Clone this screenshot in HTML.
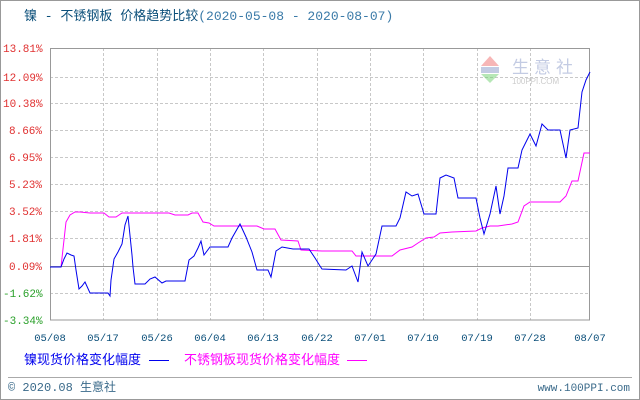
<!DOCTYPE html>
<html><head><meta charset="utf-8"><style>
body{margin:0;width:640px;height:400px;background:#fff;overflow:hidden;font-family:"Liberation Mono","Noto Sans CJK SC",monospace;}
</style></head><body>
<svg width="640" height="400" xmlns="http://www.w3.org/2000/svg" style="position:absolute;left:0;top:0">
<rect x="0.5" y="0.5" width="639" height="399" fill="#fff" stroke="#999"/>
<text x="24" y="20" font-size="13" fill="#0b4f7a" font-family="Liberation Mono,Noto Sans CJK SC,monospace">镍 - 不锈钢板 价格趋势比较<tspan fill="#3a7aa8">(2020-05-08 - 2020-08-07)</tspan></text>
<g stroke="#c8c8c8" stroke-dasharray="3,2" stroke-width="1">
<line x1="50" y1="77.5" x2="590" y2="77.5"/><line x1="50" y1="103.5" x2="590" y2="103.5"/><line x1="50" y1="130.5" x2="590" y2="130.5"/><line x1="50" y1="157.5" x2="590" y2="157.5"/><line x1="50" y1="184.5" x2="590" y2="184.5"/><line x1="50" y1="211.5" x2="590" y2="211.5"/><line x1="50" y1="238.5" x2="590" y2="238.5"/><line x1="50" y1="293.5" x2="590" y2="293.5"/>
<line x1="103.5" y1="48" x2="103.5" y2="320"/><line x1="157.5" y1="48" x2="157.5" y2="320"/><line x1="210.5" y1="48" x2="210.5" y2="320"/><line x1="263.5" y1="48" x2="263.5" y2="320"/><line x1="317.5" y1="48" x2="317.5" y2="320"/><line x1="370.5" y1="48" x2="370.5" y2="320"/><line x1="423.5" y1="48" x2="423.5" y2="320"/><line x1="477.5" y1="48" x2="477.5" y2="320"/><line x1="530.5" y1="48" x2="530.5" y2="320"/>
</g>
<line x1="50" y1="266.5" x2="590" y2="266.5" stroke="#999"/>
<rect x="50.5" y="48.5" width="539" height="271.5" fill="none" stroke="#999"/>
<g font-size="11" font-family="Liberation Mono,monospace">
<text x="3" y="52" fill="#e03030">13.81%</text>
<g fill="#e03030"><text x="3" y="81">12.09%</text><text x="3" y="107">10.38%</text><text x="9" y="134">8.66%</text><text x="9" y="161">6.95%</text><text x="9" y="188">5.23%</text><text x="9" y="215">3.52%</text><text x="9" y="242">1.81%</text><text x="9" y="270">0.09%</text></g>
<g fill="#2aa02a"><text x="3" y="297">-1.62%</text><text x="3" y="324">-3.34%</text></g>
</g>
<g fill="#0b4f7a" font-size="10.5" font-family="Liberation Mono,monospace" text-anchor="middle"><text x="50" y="341">05/08</text><text x="103" y="341">05/17</text><text x="157" y="341">05/26</text><text x="210" y="341">06/04</text><text x="263" y="341">06/13</text><text x="317" y="341">06/22</text><text x="370" y="341">07/01</text><text x="423" y="341">07/10</text><text x="477" y="341">07/19</text><text x="530" y="341">07/28</text><text x="590" y="341">08/07</text></g>
<g opacity="0.5">
<polygon points="481,66 499,66 490,56" fill="#f07070"/>
<rect x="481" y="67" width="18" height="6" fill="#8898c8"/>
<polygon points="481,74 499,74 490,83" fill="#70d070"/>
<text x="512" y="73" font-size="17" fill="#8898c8" font-family="Noto Sans CJK SC,sans-serif" letter-spacing="5">生意社</text>
<text x="512" y="84" font-size="8" fill="#999" font-family="Liberation Sans,sans-serif">100PPI.COM</text>
</g>
<polyline fill="none" stroke="#ff00ff" stroke-width="1" points="50,267 61,267 64,240 66,222 70,215 75,212 80,212 90,213 104,213 109,217 116,217 122,213 169,213 175,215 188,215 192,213 198,213 203,222 209,223 214,226 257,226 264,229 275,229 281,240 298,241 301,250 322,251 352,251 356,256 392,256 400,250 412,247 418,243 426,238 434,237 440,233 452,232 476,231 482,228 490,226 498,226 512,224 518,222 524,206 530,202 560,202 566,196 572,181 578,181 584,153 590,153"/>
<polyline fill="none" stroke="#0000ee" stroke-width="1" points="50,267 61,267 64,259 67,253 71,255 74,256 76,270 79,289 82,286 85,282 90,293 108,293 110,296 111,280 114,259 118,252 122,244 125,225 128,216 132,255 133,267 135,284 145,284 150,279 155,277 162,283 166,281 185,281 189,260 194,256 198,248 201,241 204,255 210,247 228,247 232,238 240,224 246,237 252,252 257,270 268,270 271,277 276,251 282,247 293,249 298,249 309,249 315,258 320,266 322,269 346,270 352,266 358,282 362,252 368,266 372,260 376,254 382,226 396,226 400,218 406,192 412,196 418,194 424,214 436,214 440,178 446,175 454,178 458,198 476,198 480,218 484,234 490,214 496,186 500,214 504,196 508,168 518,168 522,150 526,142 530,134 536,146 542,124 548,130 560,130 566,158 570,130 578,128 582,92 586,80 590,72"/>
<text x="24" y="364" font-size="13" fill="#0000ee" font-family="Noto Sans CJK SC,sans-serif">镍现货价格变化幅度</text>
<line x1="149" y1="360.5" x2="169" y2="360.5" stroke="#0000ee"/>
<text x="184" y="364" font-size="13" fill="#ff00ff" font-family="Noto Sans CJK SC,sans-serif">不锈钢板现货价格变化幅度</text>
<line x1="347" y1="360.5" x2="367" y2="360.5" stroke="#ff00ff"/>
<line x1="8" y1="377.5" x2="632" y2="377.5" stroke="#aaa"/>
<text x="8" y="391" font-size="12" fill="#3a6a8a" font-family="Liberation Mono,Noto Sans CJK SC,monospace">© 2020.08 生意社</text>
<text x="630" y="391" font-size="11" fill="#3a6a8a" text-anchor="end" font-family="Liberation Mono,monospace">www.100PPI.com</text>
</svg>
</body></html>
